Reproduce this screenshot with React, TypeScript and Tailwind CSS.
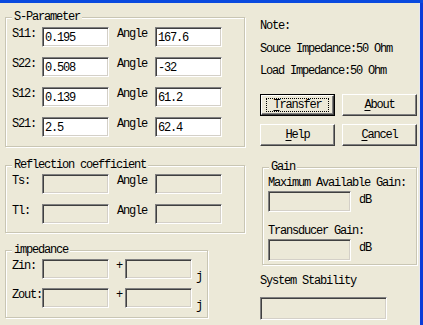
import React from "react";

const FONT = { fontFamily: '"Liberation Mono", "DejaVu Sans Mono", monospace' };

function Field({ value, w = 67, h = 20, enabled = false }: { value?: string; w?: number; h?: number; enabled?: boolean }) {
  return (
    <div
      className={`flex items-center pl-[1px] border border-t-[#808080] border-l-[#808080] border-b-white border-r-white shadow-[inset_1px_1px_0_#404040,inset_-1px_-1px_0_#D4D0C8] text-black ${enabled ? "bg-white" : "bg-[#ECE9D8]"}`}
      style={{ width: w, height: h }}
    >
      <span className="leading-[12px] pt-[2px] pl-[1px]">{value}</span>
    </div>
  );
}

function Group({ title, w, h, children }: { title: string; w: number; h: number; children: React.ReactNode }) {
  return (
    <div
      className="relative border border-[#C9C6B4] shadow-[inset_1px_1px_0_#FFFFFF,1px_1px_0_#FFFFFF]"
      style={{ width: w, height: h }}
    >
      <span className="absolute -top-[7px] left-[6px] px-[2px] bg-[#ECE9D8] leading-[12px]">{title}</span>
      {children}
    </div>
  );
}

function Btn({ label, u, def = false }: { label: string; u: number; def?: boolean }) {
  const chars = label.split("");
  const inner = (
    <span className="leading-[12px]">
      {chars.map((c, i) => (
        <span key={i} className={i === u ? "underline underline-offset-2" : ""}>{c}</span>
      ))}
    </span>
  );
  return (
    <div className={`w-[75px] h-[22px] ${def ? "border border-black" : ""}`}>
      <div className="w-full h-full flex items-center justify-center bg-[#ECE9D8] border border-t-white border-l-white border-b-[#404040] border-r-[#404040] shadow-[inset_-1px_-1px_0_#808080]">
        {def ? (
          <div className="w-[63px] h-[14px] flex items-center justify-center border border-dotted border-black">{inner}</div>
        ) : (
          inner
        )}
      </div>
    </div>
  );
}

function Row({ label, a, b, labelW = 30 }: { label: string; a?: string; b?: string; labelW?: number }) {
  const enabled = a !== undefined;
  return (
    <div className="flex items-start h-[20px]">
      <span className="leading-[12px] pt-[1px]" style={{ width: labelW }}>{label}</span>
      <Field value={a} enabled={enabled} />
      <span className="leading-[12px] pt-[1px] ml-[8px] w-[38px]">Angle</span>
      <Field value={b} enabled={enabled} />
    </div>
  );
}

function ZRow({ label }: { label: string }) {
  return (
    <div className="flex items-start h-[20px]">
      <span className="leading-[12px] pt-[1px] w-[30px]">{label}</span>
      <Field />
      <span className="leading-[12px] pt-[1px] ml-[7px] w-[9px]">+</span>
      <Field />
      <span className="leading-[12px] pt-[12px] ml-[4px]">j</span>
    </div>
  );
}

export default function App() {
  return (
    <div
      className="w-[423px] h-[325px] bg-[#ECE9D8] flex flex-col overflow-hidden text-[12px] tracking-[-1.2px] text-black"
      style={FONT}
    >
      <div className="h-[3px] bg-[#0A4ADF] shrink-0" />
      <div className="flex flex-1">
        <div className="flex flex-1 pl-[5px]">
          <div className="w-[240px] pt-[14px] flex flex-col">
            <Group title="S-Parameter" w={240} h={130}>
              <div className="flex flex-col gap-[10px] pt-[9px] pl-[6px]">
                <Row label="S11:" a="0.195" b="167.6" />
                <Row label="S22:" a="0.508" b="-32" />
                <Row label="S12:" a="0.139" b="61.2" />
                <Row label="S21:" a="2.5" b="62.4" />
              </div>
            </Group>
            <div className="mt-[18px]">
              <Group title="Reflection coefficient" w={240} h={68}>
                <div className="flex flex-col gap-[10px] pt-[8px] pl-[6px]">
                  <Row label="Ts:" labelW={30} />
                  <Row label="Tl:" labelW={30} />
                </div>
              </Group>
            </div>
            <div className="mt-[17px]">
              <Group title="impedance" w={203} h={68}>
                <div className="flex flex-col gap-[9px] pt-[8px] pl-[6px]">
                  <ZRow label="Zin:" />
                  <ZRow label="Zout:" />
                </div>
              </Group>
            </div>
          </div>
          <div className="ml-[15px] w-[157px] flex flex-col pt-[17px]">
            <div className="leading-[12px]">Note:</div>
            <div className="leading-[12px] mt-[11px]">Souce Impedance:50 Ohm</div>
            <div className="leading-[12px] mt-[10px]">Load Impedance:50 Ohm</div>
            <div className="grid grid-cols-[75px_75px] gap-x-[7px] gap-y-[8px] mt-[17px]">
              <Btn label="Transfer" u={0} def />
              <Btn label="About" u={0} />
              <Btn label="Help" u={0} />
              <Btn label="Cancel" u={0} />
            </div>
            <div className="mt-[21px] ml-[2px]">
              <Group title="Gain" w={155} h={98}>
                <div className="flex flex-col pl-[5px] pt-[9px]">
                  <div className="leading-[12px]">Maximum Available Gain:</div>
                  <div className="flex items-start mt-[2px]">
                    <Field w={83} h={21} />
                    <span className="leading-[12px] ml-[8px] pt-[3px]">dB</span>
                  </div>
                  <div className="leading-[12px] mt-[13px]">Transducer Gain:</div>
                  <div className="flex items-start mt-[2px]">
                    <Field w={83} h={22} />
                    <span className="leading-[12px] ml-[8px] pt-[3px]">dB</span>
                  </div>
                </div>
              </Group>
            </div>
            <div className="leading-[12px] mt-[10px]">System Stability</div>
            <div className="mt-[10px]">
              <Field w={127} h={23} />
            </div>
          </div>
        </div>
        <div className="w-[1px] bg-[#E8E8F0]" />
        <div className="w-[3px] bg-[#0A3CD8]" />
      </div>
    </div>
  );
}
